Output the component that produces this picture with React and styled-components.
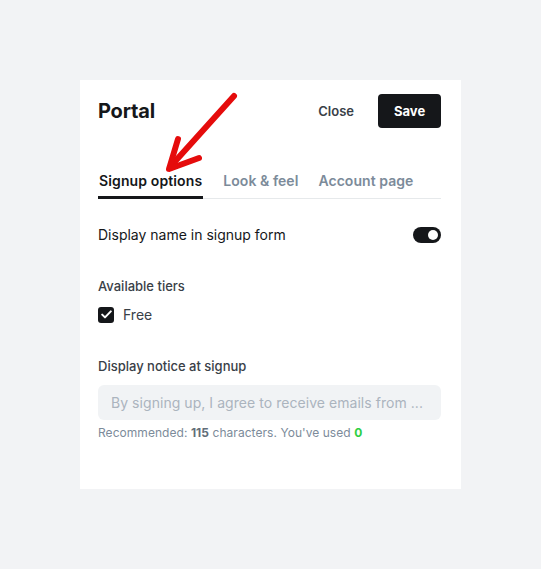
import React from "react";
import styled, { createGlobalStyle } from "styled-components";

const Global = createGlobalStyle`
  html, body { margin: 0; padding: 0; background: #f2f3f5; }
  body { font-family: Inter, "Noto Sans", sans-serif; -webkit-font-smoothing: antialiased; }
`;

const Page = styled.div`
  padding: 80px;
  box-sizing: border-box;
  width: 541px;
`;

const Panel = styled.div`
  position: relative;
  width: 381px;
  height: 409px;
  box-sizing: border-box;
  background: #fff;
  padding: 14px 20px 0 18px;
`;

const Header = styled.div`
  display: flex;
  align-items: center;
  justify-content: space-between;
  height: 34px;
`;

const Title = styled.h1`
  margin: 0;
  font-size: 20px;
  font-weight: 700;
  color: #15171a;
  letter-spacing: -0.2px;
`;

const Actions = styled.div`
  display: flex;
  align-items: center;
  gap: 11px;
`;

const Button = styled.button`
  font-family: inherit;
  font-size: 13px;
  font-weight: 600;
  height: 34px;
  padding: 0 ${(p) => (p.$primary ? "16px" : "13px")};
  border: none;
  border-radius: 4px;
  background: ${(p) => (p.$primary ? "#15171a" : "transparent")};
  color: ${(p) => (p.$primary ? "#fff" : "#394047")};
  cursor: pointer;
  ${(p) => p.$primary && "font-weight: 700; width: 63px;"}
`;

const Tabs = styled.div`
  display: flex;
  gap: 20px;
  margin-top: 43px;
  border-bottom: 1px solid #e6e9eb;
`;

const Tab = styled.div`
  font-size: 14px;
  font-weight: 600;
  line-height: 20px;
  padding: 0 ${(p) => (p.$active ? "1px" : "0")} 5px ${(p) => (p.$active ? "1px" : "0")};
  margin-bottom: -1px;
  letter-spacing: ${(p) => (p.$active ? "0.12px" : "0.05px")};
  color: ${(p) => (p.$active ? "#15171a" : "#7c8b9a")};
  border-bottom: 3px solid ${(p) => (p.$active ? "#15171a" : "transparent")};
`;

const Row = styled.div`
  display: flex;
  align-items: center;
  justify-content: space-between;
  margin-top: 26px;
`;

const RowLabel = styled.span`
  font-size: 14px;
  color: #15171a;
  line-height: 20px;
`;

const Toggle = styled.div`
  width: 28px;
  height: 16px;
  border-radius: 8px;
  background: #15171a;
  position: relative;
  &::after {
    content: "";
    position: absolute;
    top: 3px;
    right: 3px;
    width: 10px;
    height: 10px;
    border-radius: 50%;
    background: #fff;
  }
`;

const Section = styled.div`
  margin-top: ${(p) => p.$mt || 0}px;
`;

const Label = styled.div`
  font-size: 13px;
  color: #394047;
  line-height: 18px;
  font-weight: 500;
`;

const CheckRow = styled.label`
  display: flex;
  align-items: center;
  gap: 9px;
  margin-top: 11px;
  font-size: 14px;
  color: #394047;
`;

const Box = styled.span`
  width: 16px;
  height: 16px;
  border-radius: 3px;
  background: #15171a;
  display: flex;
  align-items: center;
  justify-content: center;
`;

const Input = styled.div`
  margin-top: 10px;
  height: 35px;
  border-radius: 6px;
  background: #f1f3f5;
  display: flex;
  align-items: center;
  padding: 0 12px 0 13px;
  font-size: 14px;
  letter-spacing: 0.05px;
  color: #abb4be;
  white-space: nowrap;
  overflow: hidden;
`;

const Hint = styled.div`
  margin-top: 5px;
  font-size: 12px;
  letter-spacing: 0.05px;
  color: #7c8b9a;
  b { font-weight: 700; color: #626d79; }
  em { font-style: normal; font-weight: 700; color: #30cf43; }
`;

const Arrow = styled.svg`
  position: absolute;
  left: 80px;
  top: 8px;
  overflow: visible;
  pointer-events: none;
`;

export default function App() {
  return (
    <>
      <Global />
      <Page>
        <Panel>
          <Header>
            <Title>Portal</Title>
            <Actions>
              <Button>Close</Button>
              <Button $primary>Save</Button>
            </Actions>
          </Header>
          <Tabs>
            <Tab $active>Signup options</Tab>
            <Tab>Look &amp; feel</Tab>
            <Tab>Account page</Tab>
          </Tabs>
          <Row>
            <RowLabel>Display name in signup form</RowLabel>
            <Toggle />
          </Row>
          <Section $mt={32}>
            <Label>Available tiers</Label>
            <CheckRow>
              <Box>
                <svg width="11" height="9" viewBox="0 0 11 9">
                  <path d="M1.2 4.6 L4 7.4 L9.8 1.4" fill="none" stroke="#fff" strokeWidth="2" strokeLinecap="round" strokeLinejoin="round" />
                </svg>
              </Box>
              Free
            </CheckRow>
          </Section>
          <Section $mt={34}>
            <Label>Display notice at signup</Label>
            <Input>By signing up, I agree to receive emails from ...</Input>
            <Hint>
              Recommended: <b>115</b> characters. You've used <em>0</em>
            </Hint>
          </Section>
          <Arrow width="80" height="90" viewBox="0 0 80 90">
            <g fill="none" stroke="#e50c0c" strokeWidth="6" strokeLinecap="round" strokeLinejoin="round">
              <path d="M74 8 L10 79" />
              <path d="M18 51 L9 81 L39 70" />
            </g>
          </Arrow>
        </Panel>
      </Page>
    </>
  );
}
